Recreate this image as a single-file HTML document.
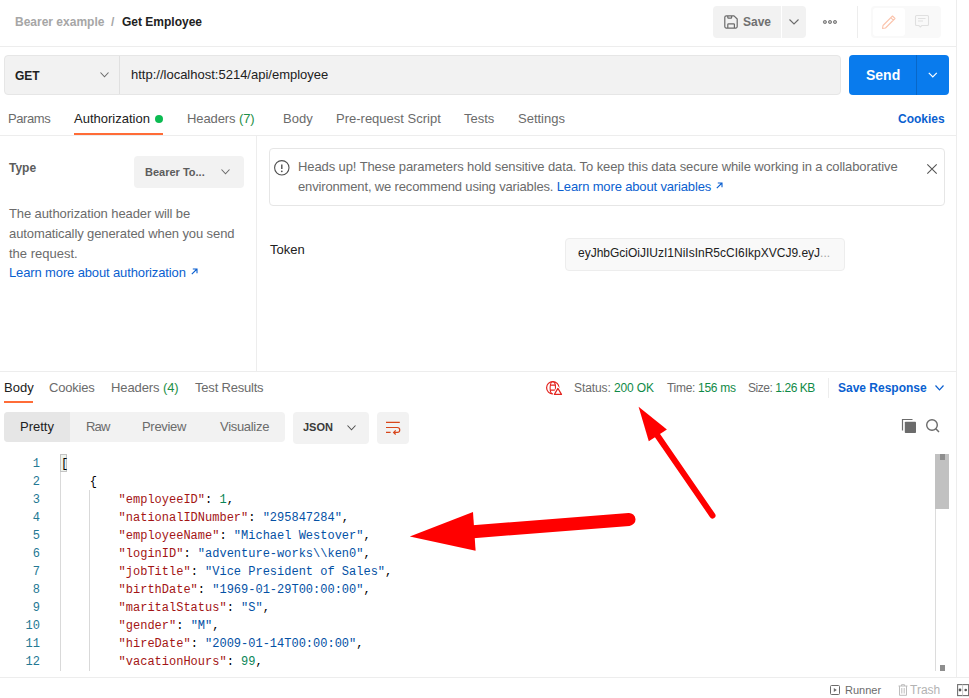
<!DOCTYPE html>
<html><head><meta charset="utf-8">
<style>
*{margin:0;padding:0;box-sizing:border-box}
html,body{width:969px;height:698px;overflow:hidden;background:#fff}
body{font-family:"Liberation Sans",sans-serif;font-size:13px;color:#212121;position:relative}
.a{position:absolute;white-space:nowrap}
.t13{font-size:13px;line-height:13px}
.t12{font-size:12px;line-height:12px}
.t11{font-size:11px;line-height:11px}
.hl{position:absolute;height:1px;background:#ededed}
.vl{position:absolute;width:1px;background:#ededed}
.g{color:#6b6b6b}
.dk{color:#212121}
.bl{color:#0a5fd0}
.grn{color:#0f8a47}
svg{position:absolute;overflow:visible}
.code{font-family:"Liberation Mono",monospace;font-size:12px;line-height:18px}
.k{color:#a31515}
.s{color:#0451a5}
.n{color:#098658}
</style></head><body>

<!-- ===== header ===== -->
<div class="a t12" style="left:15px;top:16px;font-weight:bold;color:#a6a6a6">Bearer example</div>
<div class="a t12" style="left:111px;top:16px;font-weight:bold;color:#a6a6a6">/</div>
<div class="a t12 dk" style="left:122px;top:16px;font-weight:bold">Get Employee</div>
<div class="hl" style="left:0;top:46px;width:956px"></div>
<div class="vl" style="left:956px;top:0;height:678px"></div>

<!-- save button -->
<div class="a" style="left:713px;top:6px;width:68px;height:32px;background:#f2f2f2;border-radius:4px 0 0 4px"></div>
<div class="a" style="left:782px;top:6px;width:24px;height:32px;background:#f2f2f2;border-radius:0 4px 4px 0"></div>
<svg style="left:723px;top:14px" width="16" height="16" viewBox="0 0 16 16"><path d="M3.3 1.8H11L14.2 5V12.6A1.5 1.5 0 0 1 12.7 14.1H3.3A1.5 1.5 0 0 1 1.8 12.6V3.3A1.5 1.5 0 0 1 3.3 1.8Z M4.8 1.8V3.4A0.8 0.8 0 0 0 5.6 4.2H7.8A0.8 0.8 0 0 0 8.6 3.4V1.8 M4.8 14.1V10.6A0.8 0.8 0 0 1 5.6 9.8H10.6A0.8 0.8 0 0 1 11.4 10.6V14.1" fill="none" stroke="#6b6b6b" stroke-width="1.2" stroke-linejoin="round"/></svg>
<div class="a t12" style="left:743px;top:16px;font-weight:bold;color:#707070">Save</div>
<svg style="left:789px;top:19px" width="10" height="6" viewBox="0 0 10 6"><path d="M0.5 0.5L5 5L9.5 0.5" fill="none" stroke="#6b6b6b" stroke-width="1.1"/></svg>
<svg style="left:822px;top:19px" width="16" height="6" viewBox="0 0 16 6"><circle cx="2.9" cy="3" r="1.6" fill="#b8b8b8" stroke="#7a7a7a" stroke-width="0.9"/><circle cx="8" cy="3" r="1.6" fill="#b8b8b8" stroke="#7a7a7a" stroke-width="0.9"/><circle cx="13" cy="3" r="1.6" fill="#b8b8b8" stroke="#7a7a7a" stroke-width="0.9"/></svg>
<div class="vl" style="left:857px;top:6px;height:32px"></div>
<div class="a" style="left:871px;top:6px;width:70px;height:32px;background:#f9f9f9;border-radius:4px"></div>
<div class="a" style="left:873px;top:8px;width:32px;height:28px;background:#fff;border-radius:3px"></div>
<svg style="left:881px;top:14px" width="16" height="16" viewBox="0 0 16 16"><path d="M1.5 14.5L2 11.5L11.5 2L14 4.5L4.5 14Z M9.8 3.7L12.3 6.2" fill="none" stroke="#fbc4ad" stroke-width="1.1" stroke-linejoin="round"/></svg>
<svg style="left:914px;top:14px" width="16" height="16" viewBox="0 0 16 16"><path d="M2.5 1.5H13.5A1 1 0 0 1 14.5 2.5V10.5A1 1 0 0 1 13.5 11.5H7.8L6.3 13L4.8 11.5H2.5A1 1 0 0 1 1.5 10.5V2.5A1 1 0 0 1 2.5 1.5Z M4 4.5H11.5 M4 7H9" fill="none" stroke="#e0e0e0" stroke-width="1.1"/></svg>

<!-- ===== url bar ===== -->
<div class="a" style="left:4px;top:55px;width:837px;height:40px;background:#f2f2f2;border:1px solid #e6e6e6;border-radius:4px"></div>
<div class="vl" style="left:119px;top:56px;height:38px;background:#e0e0e0"></div>
<div class="a t12 dk" style="left:15px;top:70px;font-weight:bold">GET</div>
<svg style="left:100px;top:72px" width="9" height="6" viewBox="0 0 9 6"><path d="M0.5 0.5L4.5 4.8L8.5 0.5" fill="none" stroke="#6b6b6b" stroke-width="1.1"/></svg>
<div class="a t13 dk" style="left:131px;top:68px">http://localhost:5214/api/employee</div>
<div class="a" style="left:849px;top:55px;width:100px;height:40px;background:#097bed;border-radius:4px"></div>
<div class="vl" style="left:916px;top:55px;height:40px;background:#0867c8"></div>
<div class="a" style="left:866px;top:68px;font-size:14px;line-height:14px;font-weight:bold;color:#fff">Send</div>
<svg style="left:928px;top:72px" width="10" height="6" viewBox="0 0 10 6"><path d="M0.8 0.8L4.8 4.8L8.8 0.8" fill="none" stroke="#fff" stroke-width="1.2"/></svg>

<!-- ===== request tabs ===== -->
<div class="a t13 g" style="left:8px;top:112px;letter-spacing:-0.4px">Params</div>
<div class="a t13 dk" style="left:74px;top:112px">Authorization</div>
<div class="a" style="left:155px;top:115px;width:8px;height:8px;border-radius:50%;background:#0cbb52"></div>
<div class="a" style="left:74px;top:133px;width:89px;height:2px;background:#ff6c37"></div>
<div class="a t13 g" style="left:187px;top:112px;letter-spacing:-0.1px">Headers <span style="color:#1d8f47">(7)</span></div>
<div class="a t13 g" style="left:283px;top:112px">Body</div>
<div class="a t13 g" style="left:336px;top:112px">Pre-request Script</div>
<div class="a t13 g" style="left:464px;top:112px">Tests</div>
<div class="a t13 g" style="left:518px;top:112px">Settings</div>
<div class="a t12 bl" style="left:898px;top:113px;font-weight:bold">Cookies</div>
<div class="hl" style="left:0;top:135px;width:956px"></div>

<!-- ===== auth left ===== -->
<div class="vl" style="left:256px;top:136px;height:235px"></div>
<div class="a t12" style="left:9px;top:162px;font-weight:bold;color:#5c5c5c">Type</div>
<div class="a" style="left:134px;top:156px;width:110px;height:32px;background:#f2f2f2;border-radius:4px"></div>
<div class="a t11" style="left:145px;top:167px;font-weight:bold;color:#5c5c5c">Bearer To...</div>
<svg style="left:221px;top:169px" width="9" height="6" viewBox="0 0 9 6"><path d="M0.5 0.5L4.5 4.8L8.5 0.5" fill="none" stroke="#6b6b6b" stroke-width="1.1"/></svg>
<div class="a g" style="left:9px;top:204px;font-size:13px;line-height:20px"><span style="letter-spacing:-0.1px">The authorization header will be</span><br><span style="letter-spacing:-0.1px">automatically generated when you send</span><br>the request.</div>
<div class="a t13 bl" style="left:9px;top:266px;letter-spacing:-0.13px">Learn more about authorization</div>
<svg style="left:191px;top:268px" width="7" height="7" viewBox="0 0 7 7"><path d="M0.8 6.2L6 1 M1.8 1H6V5.2" fill="none" stroke="#0a5fd0" stroke-width="1.1"/></svg>

<!-- ===== alert ===== -->
<div class="a" style="left:269px;top:148px;width:676px;height:58px;border:1px solid #e6e6e6;border-radius:4px"></div>
<svg style="left:274px;top:161px" width="16" height="16" viewBox="0 0 16 16"><circle cx="7.8" cy="6.8" r="7.2" fill="none" stroke="#505050" stroke-width="1.1"/><path d="M7.8 3.5V8" stroke="#505050" stroke-width="1.4"/><circle cx="7.8" cy="10.3" r="0.9" fill="#505050"/></svg>
<div class="a g" style="left:298px;top:157px;font-size:13px;line-height:20px;letter-spacing:-0.1px">Heads up! These parameters hold sensitive data. To keep this data secure while working in a collaborative<br><span style="letter-spacing:-0.15px">environment, we recommend using variables. <span class="bl">Learn more about variables</span></span></div>
<svg style="left:716px;top:182px" width="7" height="7" viewBox="0 0 7 7"><path d="M0.8 6.2L6 1 M1.8 1H6V5.2" fill="none" stroke="#0a5fd0" stroke-width="1.1"/></svg>
<svg style="left:927px;top:164px" width="10" height="10" viewBox="0 0 10 10"><path d="M0.3 0.3L9.7 9.6 M9.7 0.3L0.3 9.6" fill="none" stroke="#555" stroke-width="1.1"/></svg>

<div class="a t13 dk" style="left:270px;top:243px">Token</div>
<div class="a" style="left:565px;top:238px;width:280px;height:33px;background:#f9f9f9;border:1px solid #ededed;border-radius:4px"></div>
<div class="a t12 dk" style="left:578px;top:247px">eyJhbGciOiJIUzI1NiIsInR5cCI6IkpXVCJ9.eyJ<span style="color:#a6a6a6">...</span></div>

<div class="hl" style="left:0;top:371px;width:956px"></div>

<!-- ===== response tabs ===== -->
<div class="a t13 dk" style="left:4px;top:381px">Body</div>
<div class="a" style="left:4px;top:401px;width:29px;height:2px;background:#ff6c37"></div>
<div class="a t13 g" style="left:49px;top:381px;letter-spacing:-0.2px">Cookies</div>
<div class="a t13 g" style="left:111px;top:381px;letter-spacing:-0.1px">Headers <span style="color:#1d8f47">(4)</span></div>
<div class="a t13 g" style="left:195px;top:381px;letter-spacing:-0.2px">Test Results</div>

<svg style="left:545px;top:380px" width="18" height="16" viewBox="0 0 18 16"><circle cx="7.8" cy="7.8" r="6.2" fill="none" stroke="#e3241f" stroke-width="1.2"/><ellipse cx="7.8" cy="7.8" rx="2.7" ry="6.2" fill="none" stroke="#e3241f" stroke-width="1.1"/><path d="M5.1 5.1H10.5 M5.1 10.1H10.5" stroke="#e3241f" stroke-width="1.1"/><path d="M12.9 8L17 14.6H9.1Z" fill="#fff" stroke="#fff" stroke-width="3" stroke-linejoin="round"/><path d="M12.9 8.4L16.5 14.4H9.4Z" fill="none" stroke="#e3241f" stroke-width="1.2" stroke-linejoin="round"/></svg>
<div class="a t12 g" style="left:574px;top:382px;letter-spacing:-0.1px">Status: <span class="grn">200 OK</span></div>
<div class="a t12 g" style="left:667px;top:382px;letter-spacing:-0.3px">Time: <span class="grn">156 ms</span></div>
<div class="a t12 g" style="left:748px;top:382px;letter-spacing:-0.45px">Size: <span class="grn">1.26 KB</span></div>
<div class="vl" style="left:828px;top:378px;height:20px"></div>
<div class="a t12 bl" style="left:838px;top:382px;font-weight:bold">Save Response</div>
<svg style="left:935px;top:385px" width="9" height="6" viewBox="0 0 9 6"><path d="M0.5 0.5L4.5 4.8L8.5 0.5" fill="none" stroke="#0a5fd0" stroke-width="1.2"/></svg>

<!-- ===== body toolbar ===== -->
<div class="a" style="left:4px;top:412px;width:281px;height:30px;background:#f2f2f2;border-radius:4px"></div>
<div class="a" style="left:4px;top:412px;width:66px;height:30px;background:#e6e6e6;border-radius:4px 0 0 4px"></div>
<div class="a t13 dk" style="left:20px;top:420px">Pretty</div>
<div class="a t13 g" style="left:86px;top:420px;letter-spacing:-0.8px">Raw</div>
<div class="a t13 g" style="left:142px;top:420px;letter-spacing:-0.3px">Preview</div>
<div class="a t13 g" style="left:220px;top:420px;letter-spacing:-0.3px">Visualize</div>
<div class="a" style="left:293px;top:412px;width:76px;height:32px;background:#f2f2f2;border-radius:4px"></div>
<div class="a t11" style="left:303px;top:422px;font-weight:bold;color:#3a3a3a">JSON</div>
<svg style="left:347px;top:425px" width="9" height="6" viewBox="0 0 9 6"><path d="M0.5 0.5L4.5 4.8L8.5 0.5" fill="none" stroke="#505050" stroke-width="1.1"/></svg>
<div class="a" style="left:377px;top:412px;width:32px;height:32px;background:#f2f2f2;border-radius:4px"></div>
<svg style="left:385px;top:418px" width="16" height="18" viewBox="0 0 16 18"><path d="M1 4.4H14.8 M1 9.5H12.3A2.45 2.45 0 0 1 12.3 14.4H8.8 M1 14.4H5.6 M10.7 12.3L8.6 14.4L10.7 16.5" fill="none" stroke="#d8461b" stroke-width="1.2"/></svg>

<svg style="left:901px;top:418px" width="17" height="16" viewBox="0 0 17 16"><path d="M1.5 12.5V1.5H11.5" fill="none" stroke="#6b6b6b" stroke-width="1.2"/><rect x="3.8" y="3.8" width="11.2" height="11.2" rx="0.8" fill="#6b6b6b"/></svg>
<svg style="left:924px;top:417px" width="17" height="17" viewBox="0 0 17 17"><circle cx="8" cy="8" r="5.3" fill="none" stroke="#6b6b6b" stroke-width="1.4"/><path d="M11.8 11.8L15 15" stroke="#6b6b6b" stroke-width="1.5"/></svg>

<!-- ===== code ===== -->
<div class="a code" style="left:0;top:455px;width:40px;text-align:right;color:#237893">1<br>2<br>3<br>4<br>5<br>6<br>7<br>8<br>9<br>10<br>11<br>12</div>
<div class="a" style="left:60px;top:454px;width:7px;height:18px;background:#eef3ee;border:1px solid #c4c4c4"></div>
<div class="a" style="left:60px;top:472px;width:1px;height:199px;background:#d9d9d9"></div>
<div class="a" style="left:89px;top:490px;width:1px;height:181px;background:#d9d9d9"></div>
<div class="a code" style="left:61px;top:455px;color:#000;white-space:pre">[
    {
        <span class="k">"employeeID"</span>: <span class="n">1</span>,
        <span class="k">"nationalIDNumber"</span>: <span class="s">"295847284"</span>,
        <span class="k">"employeeName"</span>: <span class="s">"Michael Westover"</span>,
        <span class="k">"loginID"</span>: <span class="s">"adventure-works\\ken0"</span>,
        <span class="k">"jobTitle"</span>: <span class="s">"Vice President of Sales"</span>,
        <span class="k">"birthDate"</span>: <span class="s">"1969-01-29T00:00:00"</span>,
        <span class="k">"maritalStatus"</span>: <span class="s">"S"</span>,
        <span class="k">"gender"</span>: <span class="s">"M"</span>,
        <span class="k">"hireDate"</span>: <span class="s">"2009-01-14T00:00:00"</span>,
        <span class="k">"vacationHours"</span>: <span class="n">99</span>,</div>

<!-- scrollbar -->
<div class="a" style="left:935px;top:454px;width:1px;height:217px;background:#dcdcdc"></div>
<div class="a" style="left:935px;top:454px;width:14px;height:55px;background:#c1c1c1"></div>
<div class="a" style="left:940px;top:454px;width:5px;height:6px;background:#8e8e8e"></div>
<div class="a" style="left:940px;top:665px;width:5px;height:6px;background:#8e8e8e"></div>

<!-- ===== red arrows ===== -->
<svg style="left:0;top:0" width="969" height="698" viewBox="0 0 969 698">
<line x1="629" y1="519.4" x2="470" y2="532" stroke="#ff0000" stroke-width="13" stroke-linecap="round"/>
<path d="M409.8 536.4L473 512.1L475.6 550.8Z" fill="#ff0000"/>
<line x1="712.5" y1="515.5" x2="655" y2="432" stroke="#ff0000" stroke-width="6" stroke-linecap="round"/>
<path d="M638.6 406.7L666.9 429.4L648.8 441.2Z" fill="#ff0000"/>
</svg>

<!-- ===== footer ===== -->
<div class="hl" style="left:0;top:677px;width:969px"></div>
<svg style="left:830px;top:685px" width="10" height="10" viewBox="0 0 10 10"><rect x="0.5" y="0.5" width="9" height="9" rx="1" fill="none" stroke="#6b6b6b" stroke-width="1"/><path d="M3.8 3L6.8 5L3.8 7Z" fill="#6b6b6b"/></svg>
<div class="a t11 g" style="left:845px;top:685px">Runner</div>
<svg style="left:898px;top:684px" width="10" height="12" viewBox="0 0 10 12"><path d="M0.5 2H9.5 M3.5 2V0.7H6.5V2 M1.5 2V11.3H8.5V2 M3.8 4V9.5 M6.2 4V9.5" fill="none" stroke="#bdbdbd" stroke-width="1"/></svg>
<div class="a t12" style="left:910px;top:684px;color:#b3b3b3">Trash</div>
<svg style="left:957px;top:684px" width="12" height="12" viewBox="0 0 12 12"><rect x="0.6" y="0.6" width="11" height="11" fill="none" stroke="#707070" stroke-width="1.1"/><path d="M5.6 0.6V11.6" stroke="#c8c8c8" stroke-width="1"/><circle cx="3" cy="6" r="1.4" fill="#555"/><circle cx="8.7" cy="6" r="1.3" fill="#555"/></svg>

</body></html>
